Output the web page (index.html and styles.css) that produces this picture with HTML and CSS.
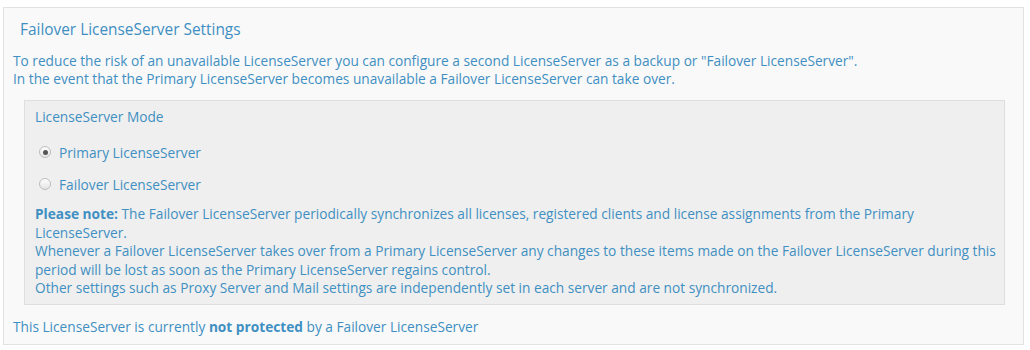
FILE: index.html
```html
<!DOCTYPE html>
<html lang="en">
<head>
  <meta charset="UTF-8">
  <title>Failover LicenseServer Settings</title>
  <link rel="stylesheet" href="styles.css">
</head>
<body>
  <div class="panel">
    <h3>Failover LicenseServer Settings</h3>
    <p class="intro">To reduce the risk of an unavailable LicenseServer you can configure a second LicenseServer as a backup or "Failover LicenseServer".<br>
    In the event that the Primary LicenseServer becomes unavailable a Failover LicenseServer can take over.</p>

    <div class="mode-box">
      <div class="mode-title">LicenseServer Mode</div>
      <label class="radio-row"><span class="radio checked"></span> Primary LicenseServer</label>
      <label class="radio-row"><span class="radio"></span> Failover LicenseServer</label>
      <p class="note"><b>Please note:</b> The Failover LicenseServer periodically synchronizes all licenses, registered clients and license assignments from the Primary LicenseServer.<br>
      Whenever a Failover LicenseServer takes over from a Primary LicenseServer any changes to these items made on the Failover LicenseServer during this period will be lost as soon as the Primary LicenseServer regains control.<br>
      Other settings such as Proxy Server and Mail settings are independently set in each server and are not synchronized.</p>
    </div>

    <p class="status">This LicenseServer is currently <b>not protected</b> by a Failover LicenseServer</p>
  </div>
</body>
</html>
```

FILE: styles.css
```css
body {
  margin: 0;
  background: #fff;
  font-family: "Segoe UI", "Open Sans", sans-serif;
  color: #3f8fc2;
  font-size: 13.7px;
}

.panel {
  margin: 7px 0 0 3px;
  width: 1010px;
  padding: 11px 0 8px 9px;
  background: #f9f9f9;
  border: 1px solid #e2e2e2;
}

h3 {
  margin: 0 0 0 7px;
  font-size: 15.4px;
  font-weight: normal;
  line-height: 22px;
}

.intro {
  margin: 11px 0 0;
  line-height: 18px;
}

.mode-box {
  margin: 12px 0 0 11px;
  width: 967px;
  padding: 6px 2px 6px 10px;
  background: #efefef;
  border: 1px solid #dedede;
}

.mode-title {
  line-height: 20px;
  margin-bottom: 9px;
}

.radio-row {
  display: flex;
  align-items: center;
  gap: 8px;
  padding-left: 4px;
  height: 32px;
}

.radio {
  width: 10px;
  height: 10px;
  border: 1px solid #bdbdbd;
  border-radius: 50%;
  background: linear-gradient(#fdfdfd, #e4e4e4);
  display: flex;
  align-items: center;
  justify-content: center;
}

.radio.checked::after {
  content: "";
  width: 5px;
  height: 5px;
  border-radius: 50%;
  background: #555;
}

.note {
  margin: 5px 0 0;
  line-height: 18.5px;
}

.status {
  margin: 13px 0 0;
  line-height: 18px;
}
```
